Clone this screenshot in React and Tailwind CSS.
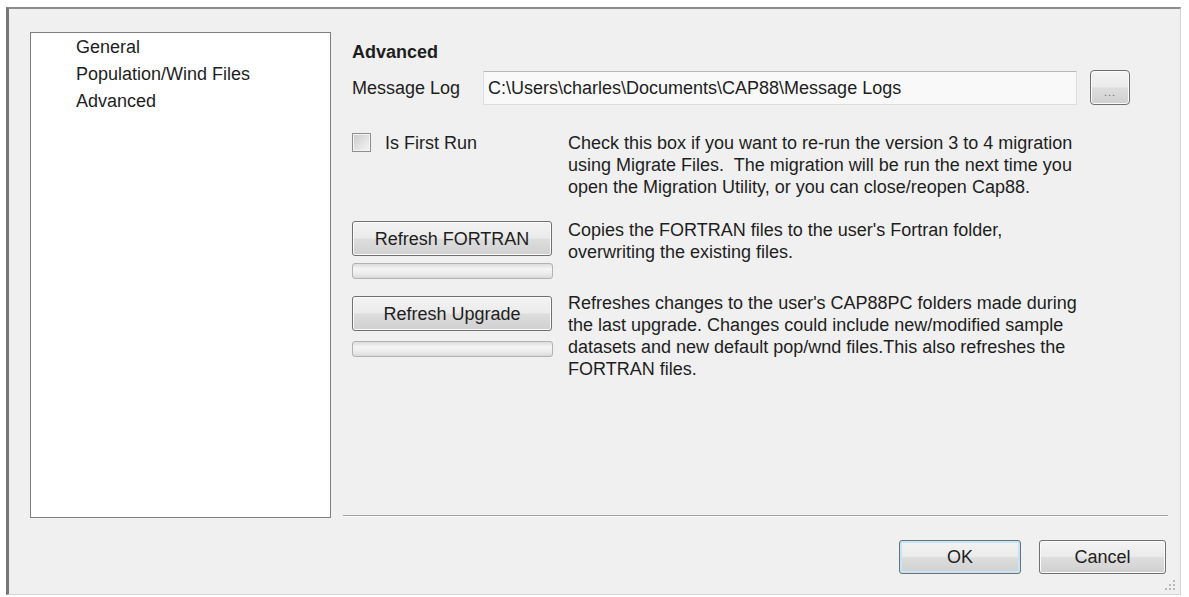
import React from 'react';

const font = { fontFamily: '"Liberation Sans", Arial, sans-serif' };

const btn =
  'rounded-[3px] border border-[#707070] bg-[linear-gradient(to_bottom,#f3f3f3_0%,#ebebeb_48%,#dddddd_52%,#d0d0d0_100%)] shadow-[inset_0_0_0_1px_#fbfbfb] text-[#1e1e1e] flex items-center justify-center';

const bar =
  'h-[16px] w-[201px] rounded-[3px] border border-[#b2b2b2] bg-[linear-gradient(to_bottom,#dcdcdc_0%,#f5f5f5_35%,#ececec_70%,#dadada_100%)]';

const settings = ['General', 'Population/Wind Files', 'Advanced'];

// label text is laid out with fixed breaks, like the WinForms labels
const firstRunHelp = [
  'Check this box if you want to re-run the version 3 to 4 migration',
  'using Migrate Files.\u00a0 The migration will be run the next time you',
  'open the Migration Utility, or you can close/reopen Cap88.',
];
const fortranHelp = ["Copies the FORTRAN files to the user's Fortran folder,", 'overwriting the existing files.'];
const upgradeHelp = [
  "Refreshes changes to the user's CAP88PC folders made during",
  'the last upgrade. Changes could include new/modified sample',
  'datasets and new default pop/wnd files.This also refreshes the',
  'FORTRAN files.',
];

function Lines({ lines }) {
  return (
    <div>
      {lines.map((l) => (
        <div key={l} className="whitespace-nowrap">
          {l}
        </div>
      ))}
    </div>
  );
}

function ResizeGrip() {
  const dots = [
    [9, 1],
    [9, 5],
    [5, 5],
    [9, 9],
    [5, 9],
    [1, 9],
  ];
  return (
    <svg className="absolute right-[4px] bottom-[3px]" width="12" height="12" viewBox="0 0 12 12">
      {dots.map(([x, y], i) => (
        <rect key={i} x={x} y={y} width="2" height="2" fill="#b8b8b8" />
      ))}
    </svg>
  );
}

export default function App() {
  return (
    <div className="w-[1189px] h-[597px] bg-white pt-[7px] pl-[6px] text-[18px] leading-[22px] text-[#1e1e1e]" style={font}>
      <div className="relative w-[1175px] h-[588px] bg-[#f0f0f0] border-l-[3px] border-t-2 border-l-[#767676] border-t-[#8c8c8c] border-r border-b border-r-[#d4d4d4] border-b-[#d4d4d4] flex flex-col">
        <div className="flex ml-[21px] mt-[23px] h-[486px]">
          {/* settings page list */}
          <div className="w-[301px] h-full bg-white border border-[#7f7f7f] pt-[1px] pl-[45px]">
            {settings.map((s) => (
              <div key={s} className="leading-[27px]">
                {s}
              </div>
            ))}
          </div>

          {/* advanced page */}
          <div className="w-[825px] ml-[12px] flex flex-col">
            <div className="pl-[9px] pt-[9px]">
              <div className="font-bold">Advanced</div>

              <div className="flex items-center mt-[7px]">
                <div className="w-[131px]">Message Log</div>
                <div className="w-[594px] h-[34px] border border-[#dadde2] border-t-[#b5b8bd] bg-[#f9f9f9] flex items-center pl-[4px]">
                  C:\Users\charles\Documents\CAP88\Message Logs
                </div>
                <div className={`${btn} ml-[13px] w-[40px] h-[35px] rounded-[4px] items-end pb-[8px]`}>
                  <span className="text-[11px] leading-[8px] text-[#6a6a6a] tracking-[1px]">...</span>
                </div>
              </div>

              <div className="flex mt-[27px]">
                <div className="w-[216px] flex items-start">
                  <div className="w-[19px] h-[19px] mt-[1px] border border-[#8e8f8f] shadow-[inset_0_0_0_1px_#f4f4f4] bg-[linear-gradient(to_bottom_right,#cbcbcb,#f6f6f6)]" />
                  <span className="ml-[14px]">Is First Run</span>
                </div>
                <Lines lines={firstRunHelp} />
              </div>

              <div className="flex mt-[21px]">
                <div className="w-[216px] pt-[2px]">
                  <div className={`${btn} w-[200px] h-[35px]`}>Refresh FORTRAN</div>
                  <div className={`${bar} mt-[7px]`} />
                </div>
                <Lines lines={fortranHelp} />
              </div>

              <div className="flex mt-[13px]">
                <div className="w-[216px] pt-[4px]">
                  <div className={`${btn} w-[200px] h-[35px]`}>Refresh Upgrade</div>
                  <div className={`${bar} mt-[10px]`} />
                </div>
                <Lines lines={upgradeHelp} />
              </div>
            </div>

            <div className="mt-auto mb-[1px] h-[2px] border-t border-t-[#a0a0a0] border-b border-b-white" />
          </div>
        </div>

        {/* dialog buttons */}
        <div className="flex justify-end gap-[18px] mt-[22px] pr-[14px]">
          <div className={`${btn} w-[122px] h-[34px] border-[#3c7fb1] shadow-[inset_0_0_0_2px_#c4e5f6]`}>OK</div>
          <div className={`${btn} w-[127px] h-[34px]`}>Cancel</div>
        </div>

        <ResizeGrip />
      </div>
    </div>
  );
}
